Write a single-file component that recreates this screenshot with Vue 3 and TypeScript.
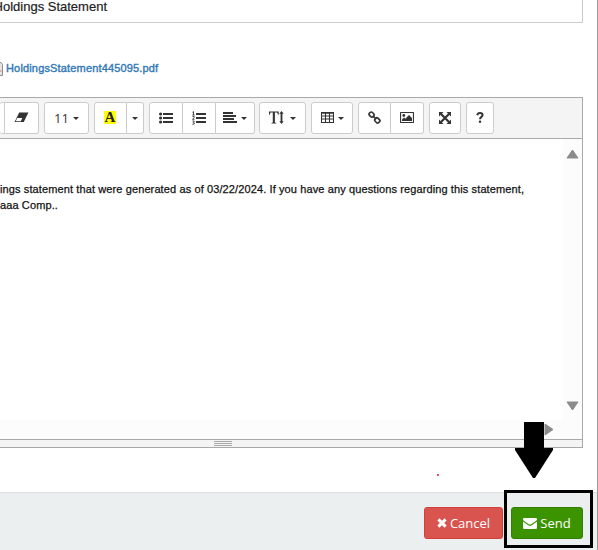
<script setup lang="ts">
const bodyLines: string[] = [
  'ings statement that were generated as of 03/22/2024. If you have any questions regarding this statement,',
  'aaa Comp..',
]
</script>

<template>
  <div class="page">
    <div class="subject"><span class="subject-text">Holdings Statement</span></div>

    <div class="attachment">
      <svg class="file" width="3" height="14" viewBox="0 0 3 14">
        <path d="M0 .5h1l1.5 2v11H0" fill="#e8e4e4" stroke="#8c8c8c" />
        <path d="M0 9h1.5" stroke="#d66" />
      </svg>
      <a class="link">HoldingsStatement445095.pdf</a>
    </div>

    <div class="editor">
      <div class="toolbar">
        <div class="group g-eraser">
          <button class="btn w-cut"></button>
          <button class="btn w-eraser">
            <svg width="15" height="11" viewBox="0 0 15 11">
              <path d="M5.2.5h9.2L9.8 10H.6z" fill="#333" />
              <path d="M3.2 6h5.2L6.7 9.2H1.8z" fill="#fff" />
            </svg>
          </button>
        </div>
        <div class="group">
          <button class="btn w-size"><span class="size">11</span><i class="caret"></i></button>
        </div>
        <div class="group">
          <button class="btn w-color"><span class="mark">A</span></button>
          <button class="btn w-drop"><i class="caret"></i></button>
        </div>
        <div class="group g-para">
          <button class="btn w-ul">
            <svg width="14" height="12" viewBox="0 0 14 12" fill="#333">
              <circle cx="1.6" cy="2" r="1.6" /><circle cx="1.6" cy="6" r="1.6" /><circle cx="1.6" cy="10" r="1.6" />
              <path d="M4 1h10v2H4zM4 5h10v2H4zM4 9h10v2H4z" />
            </svg>
          </button>
          <button class="btn w-ol">
            <svg width="14" height="14" viewBox="0 0 14 14">
              <path d="M4 2h10v2H4zM4 6h10v2H4zM4 10h10v2H4z" fill="#333" />
              <path d="M.5 1.3 1.5.6V4M.3 4h2.3M.5 5.5h1.7v1L.5 8.3h2M.5 10h1.8L1.3 11.4l1 .5v1L.4 13.3" fill="none" stroke="#333" stroke-width=".9" />
            </svg>
          </button>
          <button class="btn w-align">
            <svg width="14" height="11" viewBox="0 0 14 11" fill="#333">
              <path d="M0 0h10v2H0zM0 3h13v2H0zM0 6h11v2H0zM0 9h14v2H0z" />
            </svg>
            <i class="caret"></i>
          </button>
        </div>
        <div class="group">
          <button class="btn w-height">
            <svg width="15" height="13" viewBox="0 0 15 13" fill="#333">
              <path d="M0 .5h9.7v3.2H9L8.2 1.6H5.9v9.9l1.4.5v.6H2.4V12l1.4-.5V1.6H1.5L.7 3.7H0z" />
              <path d="M12.5 0l2.2 2.7h-1.3v7.6h1.3L12.5 13l-2.2-2.7h1.3V2.7h-1.3z" />
            </svg>
            <i class="caret"></i>
          </button>
        </div>
        <div class="group">
          <button class="btn w-table">
            <svg width="13" height="11" viewBox="0 0 13 11" fill="none" stroke="#333">
              <path d="M.5.5h12v10H.5zM0 1.3h13M0 4h13M0 7h13M4.5 1v10M8.5 1v10" stroke-width="1.1" />
            </svg>
            <i class="caret"></i>
          </button>
        </div>
        <div class="group">
          <button class="btn w-link">
            <svg width="13" height="13" viewBox="0 0 13 13" fill="none" stroke="#333" stroke-width="1.7">
              <rect x="1.1" y="1.5" width="5" height="4.2" rx="1.6" transform="rotate(45 3.6 3.6)" />
              <rect x="6.8" y="7.3" width="5" height="4.2" rx="1.6" transform="rotate(45 9.3 9.4)" />
              <path d="M4.8 4.8l3.4 3.4" />
            </svg>
          </button>
          <button class="btn w-image">
            <svg width="14" height="11" viewBox="0 0 14 11">
              <rect x=".5" y=".5" width="13" height="10" rx=".6" fill="none" stroke="#333" stroke-width="1.2" />
              <circle cx="3.8" cy="3.5" r="1.4" fill="#333" />
              <path d="M2 9V7.5L4 5.6l1.3 1.2L9 3l3 3v3z" fill="#333" />
            </svg>
          </button>
        </div>
        <div class="group">
          <button class="btn w-expand">
            <svg width="12" height="12" viewBox="0 0 12 12">
              <path d="M0 0h4.5L0 4.5zM12 0v4.5L7.5 0zM0 12V7.5L4.5 12zM12 12H7.5L12 7.5z" fill="#333" />
              <path d="M2 2l8 8M10 2l-8 8" stroke="#333" stroke-width="2.2" />
            </svg>
          </button>
        </div>
        <div class="group">
          <button class="btn w-help">
            <svg width="8" height="11" viewBox="0 0 8 11">
              <path d="M1.2 3.2C1.6 1.6 2.5 1 3.9 1c1.7 0 2.7.9 2.7 2.1C6.6 5 4 4.8 4 7.3" fill="none" stroke="#333" stroke-width="2" />
              <path d="M2.9 8.6h2.2v2.2H2.9z" fill="#333" />
            </svg>
          </button>
        </div>
      </div>

      <div class="area">
        <div class="content">
          <p v-for="(line, i) in bodyLines" :key="i" class="line">{{ line }}</p>
        </div>
        <div class="vbar">
          <svg width="13" height="10" viewBox="0 0 13 10"><path d="M6.5 1 12 9H1z" fill="#8b8b8b" stroke="#8b8b8b" stroke-linejoin="round" /></svg>
          <svg width="13" height="10" viewBox="0 0 13 10"><path d="M6.5 9 1 1h11z" fill="#8b8b8b" stroke="#8b8b8b" stroke-linejoin="round" /></svg>
        </div>
        <div class="hbar">
          <svg width="10" height="13" viewBox="0 0 10 13"><path d="M9 6.5 1 12V1z" fill="#8b8b8b" stroke="#8b8b8b" stroke-linejoin="round" /></svg>
        </div>
      </div>
      <div class="status"><div class="grip"><i></i><i></i><i></i></div></div>
    </div>

    <div class="note"><i class="dot"></i></div>

    <div class="footer">
      <button class="action cancel">
        <svg width="10" height="10" viewBox="0 0 10 10"><path d="M1.4 1.4l7.2 7.2M8.6 1.4L1.4 8.6" stroke="#fff" stroke-width="3" /></svg>
        <span>Cancel</span>
      </button>
      <button class="action send">
        <svg width="14" height="11" viewBox="0 0 14 11" fill="#fff">
          <path d="M0 1.2Q0 0 1.2 0h11.6Q14 0 14 1.2 14 2.2 12.8 3L8.2 6.2Q7 7 5.8 6.2L1.2 3Q0 2.2 0 1.2z" />
          <path d="M0 3.6 5.2 7.2Q7 8.3 8.8 7.2L14 3.6v6.2q0 1.2-1.2 1.2H1.2Q0 11 0 9.8z" />
        </svg>
        <span>Send</span>
      </button>
    </div>

    <div class="highlight"></div>
    <svg class="arrow" width="38" height="56" viewBox="0 0 38 56"><path d="M9 0h20v26h9v2L20 56h-2L0 28v-2h9z" fill="#000" /></svg>
  </div>
</template>

<style>
body { margin: 0; overflow: hidden; }
</style>

<style scoped>
.page {
  position: relative;
  display: flex;
  flex-direction: column;
  box-sizing: border-box;
  width: 598px;
  height: 550px;
  overflow: hidden;
  background: #fff;
  border-right: 1px solid #999;
  font-family: "Liberation Sans", Arial, sans-serif;
  color: #222;
}
.subject {
  box-sizing: border-box;
  width: 583px;
  height: 23px;
  border-right: 1px solid #ccc;
  border-bottom: 1px solid #ccc;
}
.subject-text {
  display: flex;
  justify-content: flex-end;
  width: 107px;
  font-size: 13px;
  line-height: 14px;
  white-space: nowrap;
  -webkit-text-stroke: 0.2px #222;
}
.attachment {
  display: flex;
  align-items: center;
  gap: 3px;
  height: 14px;
  margin-top: 39px;
}
.file { flex: none; }
.link {
  position: relative;
  top: -1px;
  color: #337ab7;
  font-size: 11px;
  letter-spacing: 0.16px;
  line-height: 14px;
  -webkit-text-stroke: 0.4px #337ab7;
}
.editor {
  box-sizing: border-box;
  display: flex;
  flex-direction: column;
  width: 583px;
  height: 351px;
  margin-top: 21px;
  border: 1px solid #a9a9a9;
  border-left: 0;
}
.toolbar {
  box-sizing: border-box;
  display: flex;
  gap: 5px;
  height: 41px;
  padding-top: 4px;
  background: #f4f4f4;
  border-bottom: 1px solid #a9a9a9;
}
.group {
  display: flex;
  flex: none;
  height: 32px;
}
.g-eraser { width: 39px; }
.g-para { margin-right: -1px; }
.btn {
  box-sizing: border-box;
  display: flex;
  flex: none;
  align-items: center;
  justify-content: center;
  gap: 4px;
  height: 32px;
  margin: 0;
  padding: 0 0 1px;
  background: #fff;
  border: 1px solid #ccc;
  color: #333;
}
.btn + .btn { border-left: 0; }
.btn:first-child { border-radius: 3px 0 0 3px; }
.btn:last-child { border-radius: 0 3px 3px 0; }
.btn:only-child { border-radius: 3px; }
.w-cut { width: 5px; border-left: 0; }
.w-eraser { width: 34px; }
.w-size { width: 45px; }
.w-color { width: 33px; padding-right: 1px; }
.w-drop { width: 17px; }
.w-ul { width: 34px; }
.w-ol { width: 33px; }
.w-align { width: 39px; }
.w-height { width: 47px; gap: 6px; }
.w-table { width: 42px; }
.w-link { width: 33px; }
.w-image { width: 33px; }
.w-expand { width: 32px; }
.w-help { width: 28px; }
.size {
  font-family: "Open Sans", sans-serif;
  font-size: 13px;
  line-height: 16px;
}
.caret {
  width: 0;
  height: 0;
  margin-top: 2px;
  border: 3px solid transparent;
  border-top-color: #333;
  border-bottom: 0;
}
.mark {
  width: 12px;
  height: 13px;
  background: #ff0;
  color: #222;
  font: bold 15px/13px "Liberation Serif", serif;
  text-align: center;
}
.area {
  display: grid;
  grid-template-columns: 563px 19px;
  grid-template-rows: 281px 19px;
}
.content { overflow: hidden; padding-top: 42px; }
.line {
  margin: 0;
  height: 16px;
  color: #111;
  font-size: 11px;
  letter-spacing: 0.112px;
  line-height: 16px;
  white-space: nowrap;
  -webkit-text-stroke: 0.25px #111;
}
.vbar {
  display: flex;
  flex-direction: column;
  align-items: center;
  justify-content: space-between;
  box-sizing: border-box;
  padding: 10px 0 9px;
  grid-row: 1;
  grid-column: 2;
  background: #fcfcfc;
}
.hbar {
  display: flex;
  align-items: center;
  justify-content: flex-end;
  box-sizing: border-box;
  padding-right: 28px;
  grid-column: 1 / 3;
  background: #fcfcfc;
}
.status {
  box-sizing: border-box;
  display: flex;
  height: 8px;
  padding: 1px 0 0 214px;
  background: #f4f4f4;
  border-top: 1px solid #a9a9a9;
}
.grip {
  display: flex;
  flex-direction: column;
  gap: 1px;
  width: 18px;
}
.grip i { height: 1px; background: #a9a9a9; }
.note {
  box-sizing: border-box;
  height: 44px;
  padding: 26px 0 0 437px;
}
.dot { display: block; width: 2px; height: 2px; background: #f05050; }
.footer {
  box-sizing: border-box;
  display: flex;
  align-items: flex-start;
  gap: 8px;
  height: 58px;
  padding: 14px 0 0 424px;
  background: #ebeff0;
  border-top: 1px solid #ddd;
}
.action {
  box-sizing: border-box;
  display: flex;
  align-items: center;
  justify-content: center;
  gap: 3px;
  height: 32px;
  margin: 0;
  padding: 0;
  border-radius: 3px;
  color: #fff;
  font-family: "Open Sans", sans-serif;
  font-size: 13px;
  line-height: 20px;
}
.cancel { width: 79px; background: #d9534f; border: 1px solid #d43f3a; }
.send { width: 72px; background: #3c9300; border: 1px solid #338000; }
.highlight {
  position: absolute;
  box-sizing: border-box;
  left: 504px;
  top: 490px;
  width: 89px;
  height: 58px;
  border: 3px solid #000;
}
.arrow { position: absolute; left: 515px; top: 422px; }
</style>
